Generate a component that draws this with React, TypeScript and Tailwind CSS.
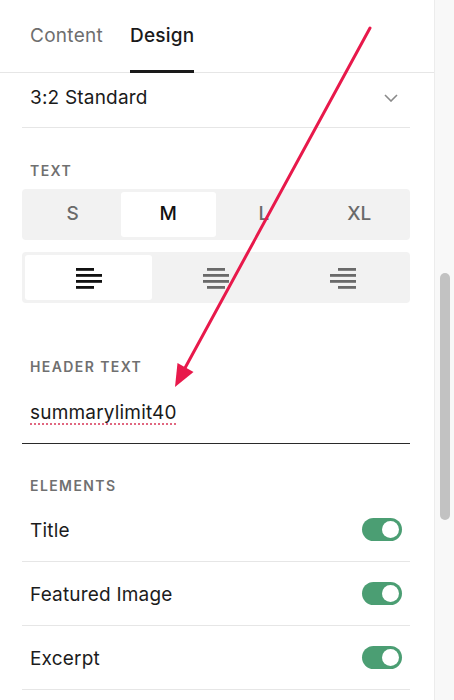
import React from "react"

// ── Small pieces ──────────────────────────────────────────────────────────────
function Label({ children }: { children: React.ReactNode }) {
  return (
    <div className="pl-[8px] text-[14px] leading-[16px] font-semibold tracking-[0.1em] text-[#707070]">
      {children}
    </div>
  )
}

function Toggle() {
  return (
    <div className="w-[40px] h-[23px] rounded-full bg-[#4b9e73] flex items-center justify-end pr-[3px]">
      <div className="w-[17px] h-[17px] rounded-full bg-white" />
    </div>
  )
}

function AlignIcon({ align, color }: { align: "left" | "center" | "right"; color: string }) {
  // four bars: short, long, long, short
  const long = 26
  const short = 18
  const x = (w: number) => (align === "left" ? 0 : align === "center" ? (long - w) / 2 : long - w)
  const widths = [short, long, long, short]
  return (
    <svg width="26" height="22" viewBox="0 0 26 22">
      {widths.map((w, i) => (
        <rect key={i} x={x(w)} y={1 + i * 6} width={w} height="2.8" fill={color} />
      ))}
    </svg>
  )
}

function Row({ label }: { label: string }) {
  return (
    <div className="h-[64px] flex items-center justify-between pl-[8px] pr-[8px] border-b border-[#e6e6e6]">
      <span className="pt-[3px] text-[19px] text-[#1c1c1c] tracking-[0.01em]">{label}</span>
      <Toggle />
    </div>
  )
}

// ── Main ──────────────────────────────────────────────────────────────────────
export default function App() {
  const sizes = ["S", "M", "L", "XL"]

  return (
    <div className="relative w-[454px] h-[700px] overflow-hidden bg-white flex" style={{ fontFamily: "Inter, 'Noto Sans', sans-serif" }}>

      {/* ── Panel ── */}
      <div className="w-[434px] flex flex-col">

        {/* Tabs */}
        <div className="h-[73px] border-b border-[#e6e6e6] flex pl-[30px] gap-[27px]">
          <div className="h-full flex items-center pt-[1px] text-[19px] text-[#6e6e6e] tracking-[0.015em]">Content</div>
          <div className="h-full flex flex-col justify-between">
            <div className="pt-[23px] text-[19px] leading-[26px] font-medium text-[#1a1a1a] tracking-[0.01em]">Design</div>
            <div className="h-[3px] bg-[#1a1a1a] -mb-px" />
          </div>
        </div>

        <div className="pl-[22px] pr-[24px] flex flex-col">

          {/* Aspect dropdown */}
          <div className="h-[55px] border-b border-[#e6e6e6] flex items-center justify-between pl-[8px] pr-[12px] pb-[4px]">
            <span className="text-[19px] text-[#1a1a1a] tracking-[0.01em]">3:2 Standard</span>
            <svg width="14" height="8" viewBox="0 0 14 8" fill="none">
              <path d="M1 1l6 6 6-6" stroke="#8a8a8a" strokeWidth="1.6" />
            </svg>
          </div>

          {/* Text size */}
          <div className="mt-[35px]"><Label>TEXT</Label></div>
          <div className="mt-[10px] h-[51px] p-[3px] bg-[#f2f2f2] rounded-[4px] grid grid-cols-4">
            {sizes.map((s) => (
              <div key={s}
                className={`flex items-center justify-center rounded-[3px] text-[19px] font-medium
                  ${s === "M" ? "bg-white text-[#111]" : "text-[#6a6a6a]"}`}>
                {s}
              </div>
            ))}
          </div>

          {/* Alignment */}
          <div className="mt-[12px] h-[51px] p-[3px] bg-[#f2f2f2] rounded-[4px] grid grid-cols-3">
            <div className="bg-white rounded-[3px] flex items-center justify-center"><AlignIcon align="left" color="#111" /></div>
            <div className="flex items-center justify-center"><AlignIcon align="center" color="#6a6a6a" /></div>
            <div className="flex items-center justify-center"><AlignIcon align="right" color="#6a6a6a" /></div>
          </div>

          {/* Header text */}
          <div className="mt-[56px]"><Label>HEADER TEXT</Label></div>
          <div className="mt-[22px] h-[47px] border-b-[1.5px] border-[#2a2a2a] pl-[8px] pt-[2px]">
            <span className="text-[19px] leading-[28px] text-[#1a1a1a] tracking-[0.01em] underline decoration-dotted decoration-[#e0607a] underline-offset-[5px]">
              summarylimit40
            </span>
          </div>

          {/* Elements */}
          <div className="mt-[34px]"><Label>ELEMENTS</Label></div>
          <div className="mt-[4px] flex flex-col">
            <Row label="Title" />
            <Row label="Featured Image" />
            <Row label="Excerpt" />
          </div>
        </div>
      </div>

      {/* ── Scrollbar ── */}
      <div className="w-[20px] bg-[#f8f8f8] border-l border-[#ececec] flex flex-col items-center">
        <div className="mt-[273px] w-[10px] h-[247px] rounded-full bg-[#c2c2c2]" />
      </div>

      {/* ── Annotation arrow ── */}
      <svg className="absolute inset-0 pointer-events-none" width="454" height="700" viewBox="0 0 454 700">
        <line x1="370" y1="28" x2="185" y2="368" stroke="#e8194b" strokeWidth="3" strokeLinecap="round" />
        <polygon points="175,387 193.5,372 177.5,363" fill="#e8194b" />
      </svg>
    </div>
  )
}
